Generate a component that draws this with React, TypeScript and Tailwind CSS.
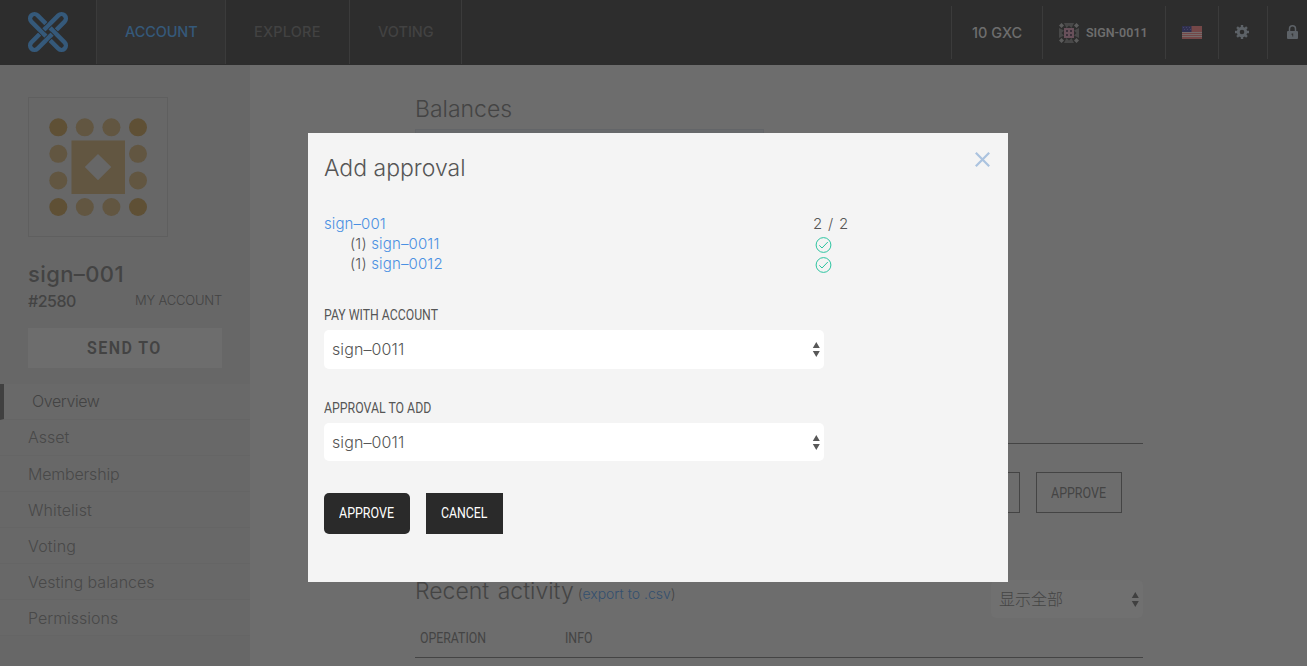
import React from "react";

const menu = [
  { label: "Asset", style: "pb-0.5" },
  { label: "Membership", style: "tracking-[-0.2px]" },
  { label: "Whitelist", style: "tracking-[0.1px]" },
  { label: "Voting", style: "tracking-[0.2px]" },
  { label: "Vesting balances", style: "" },
  { label: "Permissions", style: "" },
];

function Condensed({ children, className = "" }: { children: React.ReactNode; className?: string }) {
  return (
    <span className={`inline-block origin-left whitespace-nowrap font-['Roboto',sans-serif] ${className}`}>{children}</span>
  );
}

function Logo() {
  return (
    <svg width="42" height="42" viewBox="0 0 42 42" fill="none">
      <g transform="rotate(45 21 21) translate(21 21)" stroke="#35597a" strokeWidth="4.300">
        <rect x="-23.500" y="-4.400" width="47" height="8.800" rx="4.400" />
        <rect x="-4.400" y="-23.500" width="8.800" height="47" rx="4.400" />
        <path stroke="#2d2d2d" strokeWidth="6" d="M-4.400-7.400v6M4.400 1.400v6M-7.400 4.400h6M1.400-4.400h6" />
        <path d="M-4.400-8v7M4.400 1v7M-8 4.400h7M1-4.400h7" />
      </g>
    </svg>
  );
}

function Avatar() {
  const at = [29.3, 55.8, 82.4, 109];
  return (
    <svg width="138" height="138" viewBox="0 0 138 138">
      {at.map((y, r) =>
        at.map((x, c) => {
          const edgeR = r === 0 || r === 3;
          const edgeC = c === 0 || c === 3;
          if (!edgeR && !edgeC) return null;
          return <circle key={`${r}${c}`} cx={x} cy={y} r="9" fill={edgeR && edgeC ? "#5f5035" : "#625641"} />;
        })
      )}
      <path fillRule="evenodd" fill="#625641" d="M42.5 42.5h53.5v53.5h-53.5zM69 56 82.3 69 69 82.300 55.800 69z" />
    </svg>
  );
}

function Identicon() {
  return (
    <svg width="20" height="20" viewBox="0 0 20 20">
      <g fill="#5c5c5c">
        <path d="M2.500 0 5 2.500 2.500 5 0 2.500zM17.500 0 20 2.500 17.500 5 15 2.500zM2.500 15 5 17.500 2.500 20 0 17.500zM17.500 15 20 17.500 17.500 20 15 17.500z" />
        <path fill="#484848" d="M5 0h10l-2.500 5L10 2.500 7.500 5zM5 20h10l-2.500-5-2.500 2.500L7.500 15zM0 5v10l5-2.500L2.500 10 5 7.500zM20 5v10l-5-2.500 2.500-2.500L15 7.500z" />
      </g>
      <path fill="#68505a" d="M5 5h10v10H5z" />
      <path fill="#39303a" d="M7 7h2v2H7zM11 7h2v2h-2zM7 11h2v2H7zM11 11h2v2h-2z" />
    </svg>
  );
}

function Flag() {
  return (
    <svg width="20" height="13" viewBox="0 0 20 13">
      <path fill="#744747" d="M0 0h20v13H0z" />
      <path stroke="#777" strokeWidth="1" d="M0 6.500h20M0 8.500h20M0 10.500h20" opacity=".75" />
      <path fill="#303050" d="M0 0h9.500v6H0z" />
      <path stroke="#454566" strokeDasharray="1 2" d="M1 1.500h8M2 3.500h7" />
    </svg>
  );
}

function Gear() {
  return (
    <svg width="14" height="14" viewBox="0 0 14 14">
      <g fill="#5d6267">
        <path d="M5.800 0h2.400v14H5.800zM0 5.800h14v2.400H0z" />
        <path d="M5.800 0h2.400v14H5.800zM0 5.800h14v2.400H0z" transform="rotate(45 7 7)" />
        <circle cx="7" cy="7" r="5.200" />
      </g>
      <circle cx="7" cy="7" r="2.300" fill="#2d2d2d" />
    </svg>
  );
}

function Lock() {
  return (
    <svg width="11" height="14" viewBox="0 0 11 14">
      <path d="M2.500 7V3.800a3 3 0 0 1 6 0V7" fill="none" stroke="#5d6267" strokeWidth="1.500" />
      <rect y="6" width="11" height="8" rx="1" fill="#5d6267" />
      <path d="M4.600 8.500h1.600v3h-.9V10h-.7z" fill="#333" />
    </svg>
  );
}

function Arrows({ color }: { color: string }) {
  return (
    <svg width="8" height="15" viewBox="0 0 8 15" fill={color}>
      <path d="M4.300 0 7.800 6h-7zM4.300 15 .8 9h7z" />
    </svg>
  );
}

function Check() {
  return (
    <svg width="17" height="16" viewBox="0 0 17 16" fill="none" stroke="#2bc4a0" strokeWidth="1">
      <circle cx="8.500" cy="8" r="7.400" />
      <path d="M4.300 8.300 7 11 12.800 5" />
    </svg>
  );
}

function Select({ className }: { className: string }) {
  return (
    <div className={`flex w-[500px] items-center justify-between rounded-[5px] bg-white pl-2 pr-1 ${className}`}>
      <span className="text-base font-light tracking-[0.1px] text-[#555]">sign–0011</span>
      <Arrows color="#585858" />
    </div>
  );
}

function Signer({ name }: { name: string }) {
  return (
    <div className="flex h-5 items-center pl-[26px]">
      <span className="w-[465px] tracking-[0.15px]">
        (1) <span className="text-[#4a90e2]">{name}</span>
      </span>
      <span className="pt-[2px]"><Check /></span>
    </div>
  );
}

function Modal() {
  return (
    <section className="absolute left-[308px] top-[133px] flex h-[449px] w-[700px] flex-col bg-[#f4f4f4] px-4 text-[15px] font-light text-[#565656]">
      <div className="flex h-[81px] justify-between">
        <h2 className="pt-[17px] text-[23px] leading-9">Add approval</h2>
        <svg className="mt-[19px] mr-[2px]" width="15" height="15" viewBox="0 0 15 15" fill="none" stroke="#abc3df" strokeWidth="2.200">
          <path d="m.8.8 13.400 13.400m0-13.400L.8 14.200" />
        </svg>
      </div>
      <div className="flex h-5 items-center">
        <span className="w-[489px] tracking-[0.1px] text-[#4a90e2]">sign–001</span>
        <span className="tracking-[0.800px]">2 / 2</span>
      </div>
      <Signer name="sign–0011" />
      <Signer name="sign–0012" />
      <div className="mt-[30px] h-[26px]">
        <Condensed className="scale-x-[0.875] text-sm font-normal leading-5">PAY WITH ACCOUNT</Condensed>
      </div>
      <Select className="h-[39px] pb-px" />
      <div className="mt-7 h-[26px]">
        <Condensed className="scale-x-[0.88] text-sm font-normal leading-5">APPROVAL TO ADD</Condensed>
      </div>
      <Select className="h-[38px]" />
      <div className="mt-8 flex gap-4 text-sm font-normal text-white">
        <button className="h-[41px] w-[86px] rounded-[5px] bg-[#2a2a2a] pb-0.5 pl-[15px] text-left">
          <Condensed className="scale-x-[0.89]">APPROVE</Condensed>
        </button>
        <button className="h-[41px] w-[77px] bg-[#2a2a2a] pb-0.5 pl-[15px] text-left">
          <Condensed className="scale-x-[0.88]">CANCEL</Condensed>
        </button>
      </div>
    </section>
  );
}

function Header() {
  return (
    <header className="flex h-[65px] justify-between bg-[#2d2d2d] text-[14.5px]">
      <nav className="flex h-16 font-medium text-[#424242]">
        <div className="w-[97px] border-r border-[#3b3b3b] pl-[27px] pt-[11px]"><Logo /></div>
        <div className="flex w-[129px] items-center border-r border-[#3b3b3b] bg-[#323232] pl-7 tracking-[-0.1px] text-[#35597a]">ACCOUNT</div>
        <div className="flex w-[124px] items-center border-r border-[#3b3b3b] pl-7 tracking-[0.2px]">EXPLORE</div>
        <div className="flex w-[112px] items-center border-r border-[#3b3b3b] pl-7">VOTING</div>
      </nav>
      <div className="mt-[6px] flex h-[53px] text-[#6d6d6d]">
        <div className="flex w-[91px] items-center border-l border-[#3b3b3b] pl-5 font-medium">10 GXC</div>
        <div className="flex w-[123px] items-center gap-[7px] border-l border-[#3b3b3b] pl-4">
          <Identicon />
          <Condensed className="scale-x-[0.96] text-[13px] font-semibold">SIGN-0011</Condensed>
        </div>
        <div className="flex w-[53px] items-center border-l border-[#3b3b3b] pb-px pl-4"><Flag /></div>
        <div className="flex w-[49px] items-center border-l border-[#3b3b3b] pb-px pl-4"><Gear /></div>
        <div className="flex w-10 items-center border-l border-[#3b3b3b] pb-px pl-[19px]"><Lock /></div>
      </div>
    </header>
  );
}

function Sidebar() {
  return (
    <aside className="flex w-[250px] flex-col bg-[#676767]">
      <div className="px-7 pt-8">
        <div className="h-[140px] w-[140px] border border-[#5f5f5f]"><Avatar /></div>
        <h1 className="mt-[21px] text-[22px] font-medium leading-8 tracking-[0.4px] text-[#434343]">sign–001</h1>
        <div className="flex h-[22px] items-center justify-between text-[#434343]">
          <span className="text-base font-medium tracking-[-0.5px]">#2580</span>
          <span className="text-[13px] font-light tracking-[-0.2px]">MY ACCOUNT</span>
        </div>
        <button className="mt-4 flex h-10 w-full items-center bg-[#6d6d6d] pb-px pl-[59px] text-[#434343]">
          <Condensed className="scale-x-[0.89] text-[18px] font-semibold tracking-[1.600px]">SEND TO</Condensed>
        </button>
      </div>
      <ul className="mt-4 text-base font-light text-[#494949]">
        <li className="flex h-9 items-center border-b border-l-4 border-b-[#656565] border-l-[#404040] bg-[#696969] pb-0.5 pl-7 tracking-[-0.4px] text-[#434343]">Overview</li>
        {menu.map(({ label, style }) => (
          <li key={label} className={`flex h-9 items-center border-b border-[#656565] bg-[#686868] pl-7 ${style}`}>{label}</li>
        ))}
      </ul>
    </aside>
  );
}

function Content() {
  return (
    <main className="flex-1 pl-[165px]">
      <div className="w-[728px] font-light text-[#444]">
        <h2 className="pt-7 text-[23px] leading-8">Balances</h2>
        <div className="mt-1 h-[249px] w-[349px] border border-[#636568] bg-[#67696b]" />
        <div className="mt-[65px] border-t border-[#444]" />
        <div className="mt-7 flex justify-end gap-4 pr-[21px]">
          <div className="h-[41px] w-[86px] border border-[#444]" />
          <button className="h-[41px] w-[86px] border border-[#444] pl-[14px] text-left text-sm font-normal">
            <Condensed className="scale-x-[0.89]">APPROVE</Condensed>
          </button>
        </div>
        <div className="mt-[67px] flex h-[38px] justify-between">
          <h2 className="mt-[-5px] flex items-baseline text-[23px] leading-8">
            <span className="[word-spacing:2px]">Recent activity</span>
            <span className="ml-1 text-sm">(<span className="text-[#34506f]">export to .csv</span>)</span>
          </h2>
          <div className="flex w-[152px] items-center justify-between rounded-[5px] bg-[#707070] pl-2 pr-1 text-base">
            <span>显示全部</span>
            <Arrows color="#404040" />
          </div>
        </div>
        <div className="flex h-[40px] items-center border-b border-[#444] pl-[5px] text-sm font-normal">
          <Condensed className="w-[145px] scale-x-[0.88]">OPERATION</Condensed>
          <Condensed className="scale-x-[0.88]">INFO</Condensed>
        </div>
      </div>
    </main>
  );
}

export default function App() {
  return (
    <div className="relative flex h-[666px] w-[1307px] flex-col overflow-hidden bg-[#6d6d6d] font-['Inter','Noto_Sans_CJK_SC',sans-serif]">
      <Header />
      <div className="flex flex-1">
        <Sidebar />
        <Content />
      </div>
      <Modal />
    </div>
  );
}
